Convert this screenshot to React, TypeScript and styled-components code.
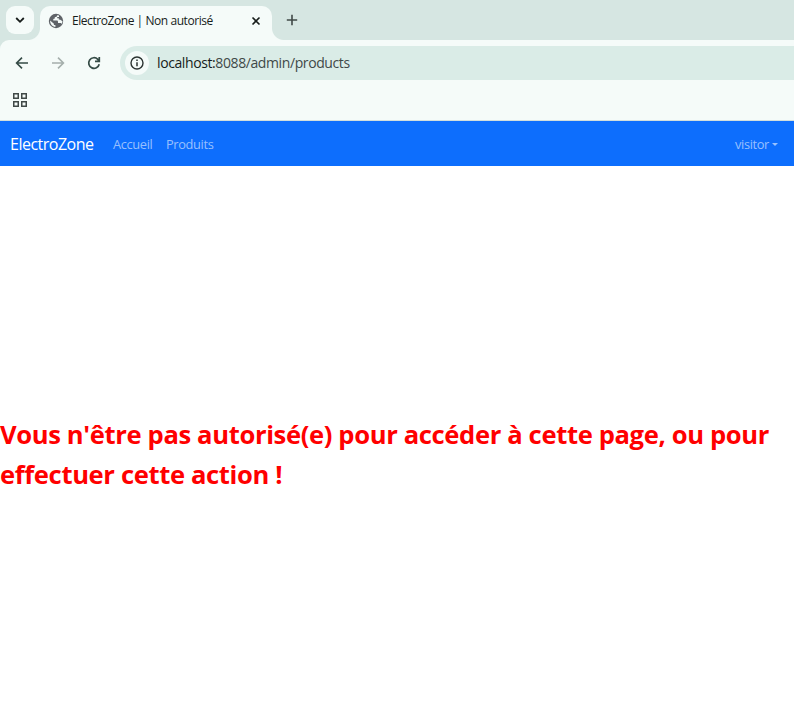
import React from 'react';
import styled, { createGlobalStyle } from 'styled-components';

const GlobalStyle = createGlobalStyle`
  * { box-sizing: border-box; }
  body { margin: 0; background: #fff; font-family: "Segoe UI", "Open Sans", "Noto Sans", sans-serif; }
  svg { display: block; }
`;

const Browser = styled.div`
  height: 716px;
  display: flex;
  flex-direction: column;
  overflow: hidden;
`;

const TabStrip = styled.div`
  height: 40px;
  flex: none;
  display: flex;
  align-items: flex-start;
  padding: 6px 0 0 6px;
  background: #d6e6e2;
`;

const TabSearch = styled.button`
  width: 28px;
  height: 28px;
  padding: 0;
  border: 0;
  border-radius: 9px;
  background: #f5fbf9;
  display: grid;
  place-items: center;
`;

const Tab = styled.div`
  position: relative;
  width: 232px;
  height: 34px;
  margin-left: 6px;
  padding: 0 9px 5px 8px;
  display: flex;
  align-items: center;
  border-radius: 10px 10px 0 0;
  background: #f5fbf9;
`;

const TabFlare = styled.span<{ $side: 'left' | 'right' }>`
  position: absolute;
  bottom: 0;
  ${(p) => p.$side}: -12px;
  width: 12px;
  height: 12px;
  background: radial-gradient(circle at ${(p) => p.$side} top, transparent 11.5px, #f5fbf9 12.5px);
`;

const TabTitle = styled.span`
  flex: 1;
  margin-left: 8px;
  font-size: 12px;
  line-height: 18px;
  letter-spacing: -0.44px;
  white-space: nowrap;
  color: #171d1b;
`;

const NewTab = styled.div`
  width: 28px;
  height: 28px;
  margin-left: 6px;
  display: grid;
  place-items: center;
`;

const ToolbarBack = styled.div`
  flex: none;
  background: #d6e6e2;
`;

const Toolbar = styled.div`
  height: 81px;
  border-radius: 9px 0 0 0;
  border-bottom: 1px solid #d3dfdc;
  background: #f5fbf9;
`;

const AddressRow = styled.div`
  display: flex;
  align-items: center;
  height: 46px;
  padding-left: 14px;
`;

const NavIcon = styled.span`
  width: 16px;
  height: 16px;
  margin-right: 20px;
  display: grid;
  place-items: center;
`;

const AddressBar = styled.div`
  flex: 1;
  height: 34px;
  margin-left: -2px;
  padding-left: 5px;
  display: flex;
  align-items: center;
  border-radius: 17px 0 0 17px;
  background: #daece7;
`;

const SiteInfo = styled.span`
  width: 24px;
  height: 24px;
  border-radius: 50%;
  display: grid;
  place-items: center;
  background: #f5fbf9;
`;

const Url = styled.span`
  margin-left: 8px;
  font-size: 14px;
  line-height: 20px;
  letter-spacing: -0.4px;
  color: #404947;
`;

const UrlHost = styled.span`
  color: #161d1b;
`;

const Bookmarks = styled.div`
  height: 34px;
  padding: 7px 0 0 13px;
`;

const Navbar = styled.nav`
  height: 45px;
  flex: none;
  display: flex;
  align-items: center;
  padding: 0 16px 0 10px;
  background: #0d6efd;
`;

const Brand = styled.span`
  width: 103px;
  font-size: 16px;
  line-height: 24px;
  letter-spacing: -0.5px;
  color: #fff;
`;

const NavLink = styled.span<{ $width?: number }>`
  width: ${(p) => (p.$width ? `${p.$width}px` : 'auto')};
  font-size: 12.8px;
  line-height: 20px;
  letter-spacing: -0.35px;
  white-space: nowrap;
  color: rgba(255, 255, 255, 0.58);
`;

const UserMenu = styled(NavLink)`
  margin-left: auto;
  display: flex;
  align-items: center;
  gap: 3px;
`;

const Caret = styled.span`
  margin-top: 2px;
  border: 3px solid transparent;
  border-top-color: currentColor;
  border-bottom: 0;
`;

const Main = styled.main`
  flex: 1;
  padding-top: 249px;
`;

const Message = styled.h1`
  margin: 0;
  font-size: 25.6px;
  line-height: 40px;
  font-weight: 700;
  letter-spacing: -0.365px;
  white-space: nowrap;
  color: #f00;
`;

export default function App() {
  return (
    <Browser>
      <GlobalStyle />
      <TabStrip>
        <TabSearch aria-label="Rechercher dans les onglets">
          <svg width="10" height="8" viewBox="0 0 10 8" fill="none" stroke="#171d1b" strokeWidth="1.8"><path d="M1.2 2 5 5.8 8.8 2" /></svg>
        </TabSearch>
        <Tab>
          <TabFlare $side="left" />
          <TabFlare $side="right" />
          <svg width="16" height="16" viewBox="0 0 16 16">
            <circle cx="8" cy="8" r="7.2" fill="#5f6368" />
            <path d="M9.3 2.2C9.2 3.4 8.2 4.1 6.8 4.2V5.6L5.3 6V7.6H8.9C9.7 7.6 10 8.2 10 9V10H12.4C13.2 10 13.6 10.5 13.7 11.2L14.5 8.3 12.3 6.7 10.8 6.6V5.2H9.2V4.1H11V2.5ZM2.1 7.5 5.9 10.7V12H7.4V13.9C4.4 13.7 2 11.2 2.1 7.5Z" fill="#f5fbf9" />
          </svg>
          <TabTitle>ElectroZone | Non autorisé</TabTitle>
          <svg width="14" height="14" viewBox="0 0 14 14" stroke="#171d1b" strokeWidth="1.6"><path d="m3.5 3.5 7 7m0-7-7 7" /></svg>
        </Tab>
        <NewTab>
          <svg width="12" height="12" viewBox="0 0 12 12" stroke="#404947" strokeWidth="1.6"><path d="M6 .8v10.4M.8 6h10.4" /></svg>
        </NewTab>
      </TabStrip>
      <ToolbarBack>
        <Toolbar>
          <AddressRow>
            <NavIcon>
              <svg width="16" height="16" viewBox="0 0 16 16" fill="none" stroke="#354b46" strokeWidth="1.6"><path d="M14 8H3M8 2.6 2.6 8 8 13.4" /></svg>
            </NavIcon>
            <NavIcon>
              <svg width="16" height="16" viewBox="0 0 16 16" fill="none" stroke="#a5afac" strokeWidth="1.6"><path d="M2 8h11M8 2.6 13.4 8 8 13.4" /></svg>
            </NavIcon>
            <NavIcon>
              <svg width="16" height="16" viewBox="0 0 16 16" fill="none" stroke="#354b46" strokeWidth="1.7"><path d="M13.2 9.2A5.3 5.3 0 1 1 11.8 4.3L13.4 6M13.3 2v4.4H9" /></svg>
            </NavIcon>
            <AddressBar>
              <SiteInfo>
                <svg width="14" height="14" viewBox="0 0 14 14" fill="none" stroke="#2b3331" strokeWidth="1.4"><circle cx="7" cy="7" r="6" /><path d="M7 6.2v4M7 3.6v1.5" strokeWidth="1.5" /></svg>
              </SiteInfo>
              <Url><UrlHost>localhost:</UrlHost>8088/admin/products</Url>
            </AddressBar>
          </AddressRow>
          <Bookmarks>
            <svg width="14" height="14" viewBox="0 0 14 14" fill="none" stroke="#404947" strokeWidth="1.5"><path d="M.75.75h4.5v4.5H.75zM8.75.75h4.5v4.5h-4.5zM.75 8.75h4.5v4.5H.75zM8.75 8.75h4.5v4.5h-4.5z" /></svg>
          </Bookmarks>
        </Toolbar>
      </ToolbarBack>
      <Navbar>
        <Brand>ElectroZone</Brand>
        <NavLink $width={53}>Accueil</NavLink>
        <NavLink>Produits</NavLink>
        <UserMenu>visitor<Caret /></UserMenu>
      </Navbar>
      <Main>
        <Message>Vous n'être pas autorisé(e) pour accéder à cette page, ou pour<br />effectuer cette action !</Message>
      </Main>
    </Browser>
  );
}
